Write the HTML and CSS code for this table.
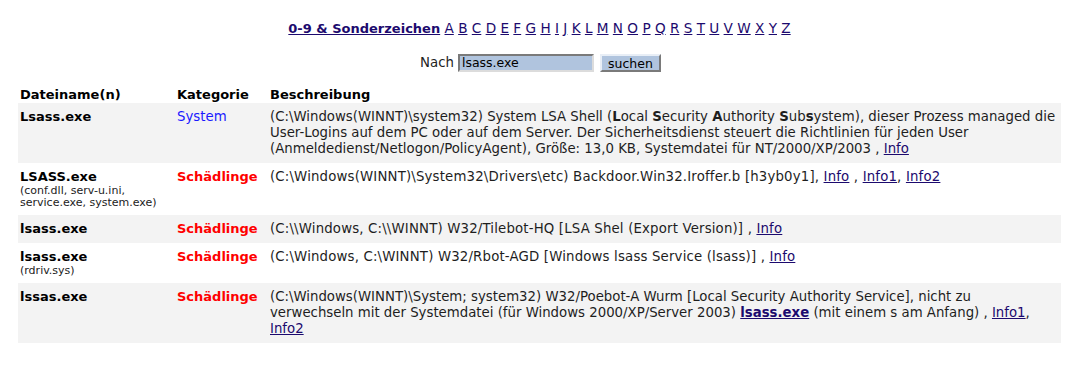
FILE: index.html
```html
<!DOCTYPE html>
<html lang="de">
<head>
<meta charset="utf-8">
<title>Dateinamen</title>
<link rel="stylesheet" href="styles.css">
</head>
<body>
<div class="alpha">
  <a class="alpha-main" href="#">0-9 &amp; Sonderzeichen</a>
  <a href="#">A</a> <a href="#">B</a> <a href="#">C</a> <a href="#">D</a> <a href="#">E</a> <a href="#">F</a> <a href="#">G</a> <a href="#">H</a> <a href="#">I</a> <a href="#">J</a> <a href="#">K</a> <a href="#">L</a> <a href="#">M</a> <a href="#">N</a> <a href="#">O</a> <a href="#">P</a> <a href="#">Q</a> <a href="#">R</a> <a href="#">S</a> <a href="#">T</a> <a href="#">U</a> <a href="#">V</a> <a href="#">W</a> <a href="#">X</a> <a href="#">Y</a> <a href="#">Z</a>
</div>
<form class="search">
  <span class="search-label">Nach</span>
  <input class="search-input" type="text" value="lsass.exe">
  <button class="search-btn" type="button">suchen</button>
</form>
<table class="files">
  <colgroup>
    <col class="col-name">
    <col class="col-cat">
    <col>
  </colgroup>
  <thead>
    <tr><th>Dateiname(n)</th><th>Kategorie</th><th>Beschreibung</th></tr>
  </thead>
  <tbody>
    <tr class="odd">
      <td class="name">Lsass.exe</td>
      <td class="cat-sys">System</td>
      <td>(C:\Windows(WINNT)\system32) System LSA Shell (<b>L</b>ocal <b>S</b>ecurity <b>A</b>uthority <b>S</b>ub<b>s</b>ystem), dieser Prozess managed die User-Logins auf dem PC oder auf dem Server. Der Sicherheitsdienst steuert die Richtlinien für jeden User (Anmeldedienst/Netlogon/PolicyAgent), Größe: 13,0 KB, Systemdatei für NT/2000/XP/2003 , <a href="#">Info</a></td>
    </tr>
    <tr>
      <td class="name">LSASS.exe<span class="sub">(conf.dll, serv-u.ini, service.exe, system.exe)</span></td>
      <td class="cat-bad">Schädlinge</td>
      <td class="wide">(C:\Windows(WINNT)\System32\Drivers\etc) Backdoor.Win32.Iroffer.b [h3yb0y1], <a href="#">Info</a> , <a href="#">Info1</a>, <a href="#">Info2</a></td>
    </tr>
    <tr class="odd">
      <td class="name">lsass.exe</td>
      <td class="cat-bad">Schädlinge</td>
      <td class="wide">(C:\\Windows, C:\\WINNT) W32/Tilebot-HQ [LSA Shel (Export Version)] , <a href="#">Info</a></td>
    </tr>
    <tr>
      <td class="name">lsass.exe<span class="sub">(rdriv.sys)</span></td>
      <td class="cat-bad">Schädlinge</td>
      <td class="wide">(C:\Windows, C:\WINNT) W32/Rbot-AGD [Windows lsass Service (lsass)] , <a href="#">Info</a></td>
    </tr>
    <tr class="odd">
      <td class="name">lssas.exe</td>
      <td class="cat-bad">Schädlinge</td>
      <td>(C:\Windows(WINNT)\System; system32) W32/Poebot-A Wurm [Local Security Authority Service], nicht zu<br>verwechseln mit der Systemdatei (für Windows 2000/XP/Server 2003) <a class="strong-link" href="#">lsass.exe</a> (mit einem s am Anfang) , <a href="#">Info1</a>,<br><a href="#">Info2</a></td>
    </tr>
  </tbody>
</table>
</body>
</html>
```

FILE: styles.css
```css
html, body {
  margin: 0;
  padding: 0;
  background: #ffffff;
}
body {
  font-family: "DejaVu Sans", Verdana, sans-serif;
  font-size: 13.3px;
  color: #000000;
  padding: 0 18px;
}
a {
  color: #1c0a6e;
  text-decoration: underline;
}
.alpha {
  text-align: center;
  padding-top: 20px;
  line-height: 16px;
  height: 16px;
  font-size: 13.6px;
}
.alpha-main {
  font-weight: bold;
  font-size: 13px;
  color: #1c0a6e;
}
.search {
  margin: 17px 0 0;
  display: flex;
  justify-content: center;
  align-items: center;
  height: 19px;
  padding-left: 2px;
}
.search-label {
  margin-right: 4px;
  color: #222;
}
.search-input {
  width: 136px;
  height: 18px;
  box-sizing: border-box;
  padding: 0 2px;
  background: #b0c4de;
  border: 2px solid;
  border-color: #7a7a7a #dcdcdc #dcdcdc #7a7a7a;
  font-family: "DejaVu Sans", Verdana, sans-serif;
  font-size: 12.5px;
  color: #000;
  margin-right: 6px;
}
.search-btn {
  width: 61px;
  height: 18px;
  box-sizing: border-box;
  padding: 0;
  background: #b0c4de;
  border: 2px solid;
  border-color: #e8eef6 #7a7a7a #7a7a7a #e8eef6;
  font-family: "DejaVu Sans", Verdana, sans-serif;
  font-size: 12.5px;
  color: #000;
}
.files {
  width: 100%;
  border-collapse: collapse;
  table-layout: fixed;
  margin-top: 13px;
}
.col-name { width: 157px; }
.col-cat { width: 93px; }
.files th {
  text-align: left;
  font-weight: bold;
  font-size: 13px;
  padding: 2px 2px 0;
  line-height: 16px;
  vertical-align: top;
}
.files td {
  padding: 6px 3px 6px 2px;
  line-height: 16px;
  vertical-align: top;
  color: #1e1e1e;
}
.files td.wide {
  letter-spacing: 0.17px;
}
.files tr.odd td {
  background: #f3f3f3;
}
.files td.name {
  font-weight: bold;
  font-size: 13px;
  color: #000;
}
.sub {
  display: block;
  font-weight: normal;
  font-size: 11px;
  line-height: 12px;
  color: #222;
}
.cat-sys {
  color: #1a1aff !important;
}
.cat-bad {
  color: #ff0000 !important;
  font-weight: bold;
  font-size: 13px;
}
.strong-link {
  font-weight: bold;
}
```
